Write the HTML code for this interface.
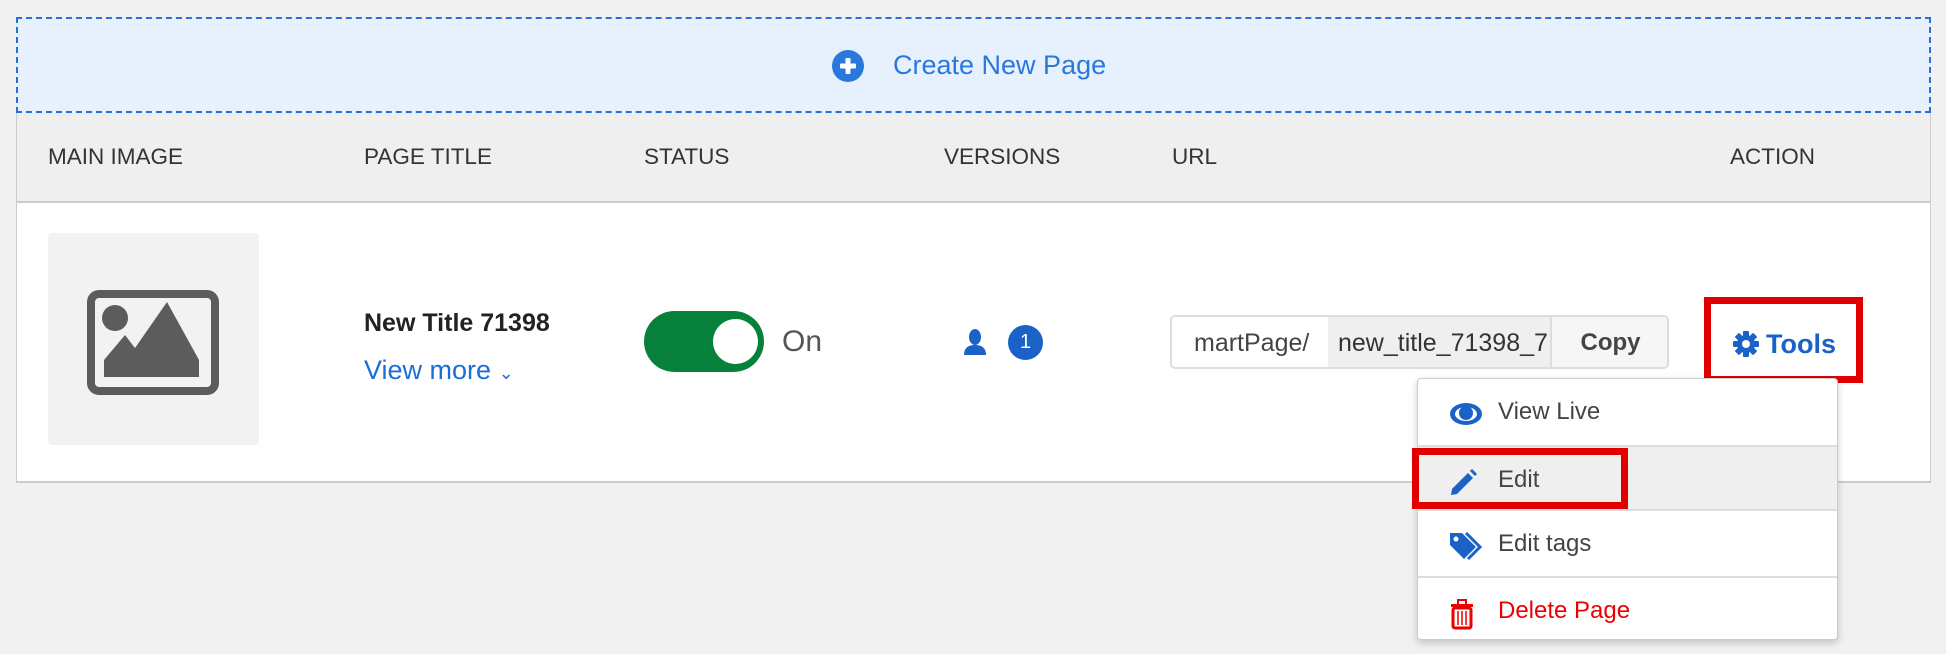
<!DOCTYPE html>
<html><head><meta charset="utf-8"><style>
*{box-sizing:border-box;margin:0;padding:0}
body{width:1946px;height:654px;background:#f1f1f1;font-family:"Liberation Sans",Arial,sans-serif;position:relative;overflow:hidden;color:#333}
.abs{position:absolute}
.banner{left:16px;top:17px;width:1915px;height:96px;background:#e7f1fd;border:2px dashed #2a6fd6;}
.hdr{left:16px;top:113px;width:1915px;height:90px;background:#efefef;border-left:1px solid #ccc;border-right:1px solid #ccc;border-bottom:2px solid #ccc}
.hdr span{position:absolute;top:31px;font-size:22.5px;color:#333}
.row{left:16px;top:203px;width:1915px;height:280px;background:#fff;border:1px solid #ccc;border-top:none;border-bottom:2px solid #ccc}
.blue{color:#1a6fd6}
.menu{left:1417px;top:378px;width:421px;height:262px;background:#fff;border:1px solid #ccc;border-radius:4px;box-shadow:0 3px 8px rgba(0,0,0,.2)}
.item{position:absolute;left:0;width:419px;height:66px;font-size:24px;color:#444}
.item span{position:absolute;left:80px;top:19px}
.item svg{position:absolute;left:30px;top:20px}
</style></head><body>
<div class="abs banner"></div>
<svg class="abs" style="left:831px;top:49px" width="34" height="34" viewBox="0 0 34 34"><circle cx="17" cy="17" r="16" fill="#2a78dc"/><rect x="9" y="14.5" width="16" height="5" rx="1" fill="#fff"/><rect x="14.5" y="9" width="5" height="16" rx="1" fill="#fff"/></svg>
<div class="abs blue" style="left:893px;top:50px;font-size:27px;color:#2a78dc">Create New Page</div>

<div class="abs hdr">
<span style="left:31px">MAIN IMAGE</span>
<span style="left:347px">PAGE TITLE</span>
<span style="left:627px">STATUS</span>
<span style="left:927px">VERSIONS</span>
<span style="left:1155px">URL</span>
<span style="left:1713px">ACTION</span>
</div>
<div class="abs row"></div>

<div class="abs" style="left:48px;top:233px;width:211px;height:212px;background:#f2f2f2;border-radius:4px"></div>
<svg class="abs" style="left:87px;top:290px" width="132" height="105" viewBox="0 0 132 105"><rect x="4" y="4" width="124" height="97" rx="8" fill="none" stroke="#5c5c5c" stroke-width="8"/><circle cx="28" cy="28" r="13" fill="#5c5c5c"/><path d="M17 87 L17 70 L38 45 L48 58 L80 12 L112 70 L112 87 Z" fill="#5c5c5c"/></svg>

<div class="abs" style="left:364px;top:309px;font-size:25px;font-weight:bold;color:#222">New Title 71398</div>
<div class="abs blue" style="left:364px;top:355px;font-size:27px">View more <span style="font-size:18px">&#8964;</span></div>

<div class="abs" style="left:644px;top:311px;width:120px;height:61px;background:#06803a;border-radius:31px"></div>
<div class="abs" style="left:713px;top:319px;width:45px;height:45px;background:#fff;border-radius:50%"></div>
<div class="abs" style="left:782px;top:325px;font-size:30px;color:#555">On</div>

<svg class="abs" style="left:962px;top:328px" width="26" height="28" viewBox="0 0 26 28"><ellipse cx="13" cy="9" rx="6" ry="8" fill="#1a62c8"/><path d="M2 27 Q2 17 13 17 Q24 17 24 27Z" fill="#1a62c8"/></svg>
<div class="abs" style="left:1008px;top:325px;width:35px;height:35px;border-radius:50%;background:#1a62c8;color:#fff;font-size:20px;text-align:center;line-height:35px">1</div>

<div class="abs" style="left:1170px;top:315px;width:499px;height:54px;border:2px solid #ddd;border-radius:5px;background:#fff;overflow:hidden;font-size:25px">
<div class="abs" style="left:22px;top:12px;color:#444">martPage/</div>
<div class="abs" style="left:156px;top:0;width:224px;height:52px;background:#efefef;border-right:2px solid #ddd;overflow:hidden"><span style="position:absolute;left:10px;top:12px;color:#333;white-space:nowrap">new_title_71398_7</span></div>
<div class="abs" style="left:380px;top:0;width:117px;height:52px;background:#f6f6f6;font-weight:bold;color:#444;text-align:center;line-height:52px;font-size:24px">Copy</div>
</div>

<div class="abs" style="left:1704px;top:297px;width:159px;height:86px;border:7px solid #e00000"></div>
<svg class="abs" style="left:1732px;top:330px" width="28" height="28" viewBox="0 0 28 28"><g fill="#1a62c8"><circle cx="14" cy="14" r="9"/><rect x="11" y="1" width="6" height="26" rx="1"/><rect x="1" y="11" width="26" height="6" rx="1"/><rect x="11" y="1" width="6" height="26" rx="1" transform="rotate(45 14 14)"/><rect x="11" y="1" width="6" height="26" rx="1" transform="rotate(-45 14 14)"/></g><circle cx="14" cy="14" r="4" fill="#fff"/></svg>
<div class="abs" style="left:1766px;top:329px;font-size:27px;font-weight:bold;color:#1a62c8">Tools</div>

<div class="abs menu">
<div class="item" style="top:0"><svg width="36" height="30" viewBox="0 0 36 30"><ellipse cx="18" cy="15" rx="16" ry="11" fill="#1a62c8"/><ellipse cx="18" cy="15" rx="11" ry="7" fill="#fff"/><circle cx="18" cy="14" r="7" fill="#1a62c8"/></svg><span>View Live</span></div>
<div class="item" style="top:66px;background:#efefef;border-top:2px solid #ddd;border-bottom:2px solid #ddd"><svg width="30" height="30" viewBox="0 0 30 30"><path d="M4 22 L20 6 L25 11 L9 27 L3 28Z" fill="#1a62c8"/><path d="M22 4 L24 2 L29 7 L27 9Z" fill="#1a62c8"/></svg><span>Edit</span></div>
<div class="item" style="top:132px"><svg width="34" height="34" viewBox="0 0 34 34"><path d="M2 2 L14 2 L28 16 L16 28 L2 14Z" fill="#1a62c8"/><path d="M18 2 L32 16 L20 28" fill="none" stroke="#1a62c8" stroke-width="3"/><circle cx="8" cy="8" r="2.5" fill="#fff"/></svg><span>Edit tags</span></div>
<div class="item" style="top:197px;border-top:2px solid #ddd"><svg width="28" height="32" viewBox="0 0 28 32"><rect x="3" y="6" width="22" height="3" fill="#e00"/><rect x="10" y="2" width="8" height="5" fill="none" stroke="#e00" stroke-width="2"/><rect x="5" y="10" width="18" height="20" rx="2" fill="none" stroke="#e00" stroke-width="3"/><path d="M10 13v14M14 13v14M18 13v14" stroke="#e00" stroke-width="1.5"/></svg><span style="color:#e00">Delete Page</span></div>
</div>
<div class="abs" style="left:1412px;top:448px;width:216px;height:61px;border:7px solid #e00000"></div>
</body></html>
